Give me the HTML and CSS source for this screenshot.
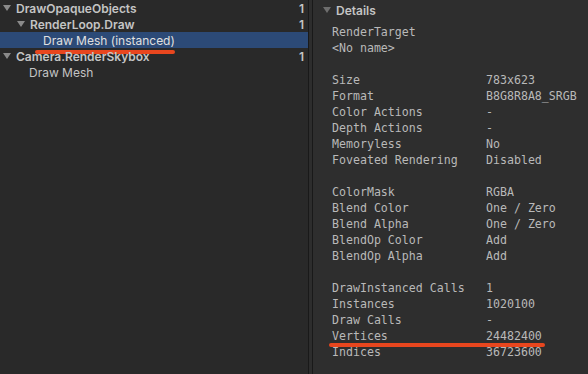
FILE: index.html
```html
<!DOCTYPE html>
<html lang="en">
<head>
    <meta charset="UTF-8">
    <title>Frame Debugger</title>
    <link rel="stylesheet" href="styles.css">
</head>
<body>
    <div class="window">
        <!-- Event tree -->
        <div class="tree">
            <div class="row bold">
                <span class="arrow"></span>
                <span class="name">DrawOpaqueObjects</span>
                <span class="count">1</span>
            </div>
            <div class="row bold level1">
                <span class="arrow"></span>
                <span class="name">RenderLoop.Draw</span>
                <span class="count">1</span>
            </div>
            <div class="row level2 selected">
                <span class="name marked">Draw Mesh (instanced)</span>
            </div>
            <div class="row bold">
                <span class="arrow"></span>
                <span class="name">Camera.RenderSkybox</span>
                <span class="count">1</span>
            </div>
            <div class="row level1b">
                <span class="name">Draw Mesh</span>
            </div>
        </div>

        <div class="splitter"></div>

        <!-- Details panel -->
        <div class="details">
            <div class="header">
                <span class="arrow"></span>
                <span>Details</span>
            </div>
            <div class="props">
                <div class="prop"><span>RenderTarget</span></div>
                <div class="prop"><span>&lt;No name&gt;</span></div>
                <div class="spacer"></div>
                <div class="prop"><span class="key">Size</span><span>783x623</span></div>
                <div class="prop"><span class="key">Format</span><span>B8G8R8A8_SRGB</span></div>
                <div class="prop"><span class="key">Color Actions</span><span>-</span></div>
                <div class="prop"><span class="key">Depth Actions</span><span>-</span></div>
                <div class="prop"><span class="key">Memoryless</span><span>No</span></div>
                <div class="prop"><span class="key">Foveated Rendering</span><span>Disabled</span></div>
                <div class="spacer"></div>
                <div class="prop"><span class="key">ColorMask</span><span>RGBA</span></div>
                <div class="prop"><span class="key">Blend Color</span><span>One / Zero</span></div>
                <div class="prop"><span class="key">Blend Alpha</span><span>One / Zero</span></div>
                <div class="prop"><span class="key">BlendOp Color</span><span>Add</span></div>
                <div class="prop"><span class="key">BlendOp Alpha</span><span>Add</span></div>
                <div class="spacer"></div>
                <div class="prop"><span class="key">DrawInstanced Calls</span><span>1</span></div>
                <div class="prop"><span class="key">Instances</span><span>1020100</span></div>
                <div class="prop"><span class="key">Draw Calls</span><span>-</span></div>
                <div class="prop marked"><span class="key">Vertices</span><span>24482400</span></div>
                <div class="prop"><span class="key">Indices</span><span>36723600</span></div>
            </div>
        </div>
    </div>
</body>
</html>
```

FILE: styles.css
```css
body {
    margin: 0;
    background-color: #2a2a2a;
    font-family: Inter, "Noto Sans", sans-serif;
    overflow: hidden;
}
.window {
    display: flex;
    width: 588px;
    height: 374px;
}
.tree {
    width: 308px;
    padding-top: 0;
    background-color: #292929;
}
.row {
    position: relative;
    display: flex;
    align-items: center;
    height: 16px;
    padding-left: 3px;
    padding-right: 4px;
    font-size: 12px;
    color: #c4c4c4;
}
.row.bold {
    font-weight: 600;
}
.row.level1 {
    padding-left: 17px;
}
.row.level2 {
    padding-left: 43px;
}
.row.level1b {
    padding-left: 29px;
}
.row.selected {
    background-color: #2c4a77;
    color: #e0e0e0;
}
.arrow {
    width: 0;
    height: 0;
    margin-right: 5px;
    border-left: 4px solid transparent;
    border-right: 4px solid transparent;
    border-top: 6px solid #8a8a8a;
}
.count {
    margin-left: auto;
}
.row .marked::after {
    content: "";
    position: absolute;
    left: 35px;
    top: 18px;
    width: 140px;
    height: 4px;
    border-radius: 2px;
    background-color: #e8461e;
}
.splitter {
    width: 5px;
    border-left: 1px solid #191919;
    border-right: 1px solid #191919;
    box-sizing: border-box;
    background-color: #2d2d2d;
}
.details {
    flex: 1;
    background-color: #2e2e2e;
}
.header {
    display: flex;
    align-items: center;
    height: 20px;
    padding-left: 10px;
    font-size: 12px;
    font-weight: 600;
    color: #c4c4c4;
}
.header .arrow {
    border-top-color: #6e6e6e;
}
.props {
    padding-left: 19px;
    padding-top: 4px;
    font-family: "DejaVu Sans Mono", "Liberation Mono", monospace;
    font-size: 11.6px;
    color: #b9b9b9;
}
.prop {
    position: relative;
    display: flex;
    height: 16px;
    line-height: 16px;
    white-space: pre;
}
.key {
    width: 154px;
}
.spacer {
    height: 16px;
}
.prop.marked::after {
    content: "";
    position: absolute;
    left: -3px;
    top: 15px;
    width: 216px;
    height: 4px;
    border-radius: 2px;
    background-color: #e8461e;
}
```
